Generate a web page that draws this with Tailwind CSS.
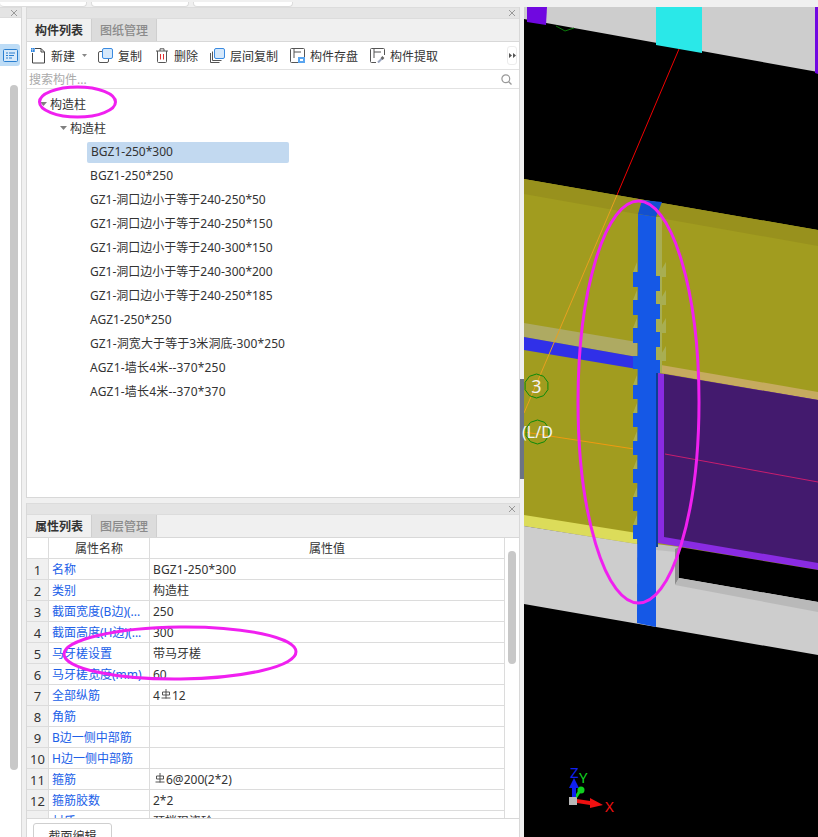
<!DOCTYPE html>
<html lang="zh">
<head>
<meta charset="utf-8">
<script src="https://cdn.jsdelivr.net/npm/@tailwindcss/browser@4"></script>
</head>
<body class="m-0 overflow-hidden bg-[#f0f0f0]">
<div class="relative w-[818px] h-[837px] overflow-hidden flex flex-col bg-[#f0f0f0] text-[12px] leading-[16px] text-[#333] font-['Noto_Sans','Noto_Sans_CJK_SC',sans-serif]">
  <!-- top tabs -->
  <div class="h-[7px] shrink-0 flex gap-[4px] items-end">
    <div class="w-[87px] h-[5px] bg-white border border-t-0 border-l-0 border-[#dcdcdc] rounded-b-[4px]"></div>
    <div class="w-[98px] h-[5px] bg-white border border-t-0 border-[#dcdcdc] rounded-b-[4px]"></div>
    <div class="w-[100px] h-[5px] bg-white border border-t-0 border-[#dcdcdc] rounded-b-[4px]"></div>
  </div>
  <div class="flex flex-1 min-h-0">
    <!-- left rail -->
    <div class="w-[22px] shrink-0 flex flex-col bg-white border-r border-[#d8d8d8]">
      <div class="h-[11px] shrink-0 bg-[#e4e4e4] border-y border-[#dcdcdc] flex items-center justify-end pr-[3px]">
        <svg width="8" height="8" viewBox="0 0 8 8"><path d="M1 1l6 6M7 1l-6 6" stroke="#999" stroke-width="1"/></svg>
      </div>
      <div class="mt-[26px] h-[22px] w-[20px] bg-[#bddcf6] rounded-r-[3px] flex items-center justify-center">
        <svg width="15" height="13" viewBox="0 0 15 13"><rect x=".5" y=".5" width="14" height="12" rx="1" fill="#d6e9fa" stroke="#2a7fd0"/><path d="M3 4h2M6 4h6M3 6.500h2M6 6.500h5M3 9h2M6 9h3" stroke="#2a7fd0"/></svg>
      </div>
      <div class="mt-[19px] ml-[10px] w-[8px] h-[685px] bg-[#c8c8c8] rounded-[4px]"></div>
    </div>
    <!-- panels column -->
    <div class="w-[494px] shrink-0 ml-[4px] flex flex-col">
      <!-- component panel -->
      <section class="h-[491px] shrink-0 flex flex-col bg-white border-x border-b border-[#d8d8d8]">
        <div class="h-[12px] shrink-0 bg-[#e4e4e4] border-y border-[#dcdcdc] flex items-center justify-end pr-[3px]">
          <svg width="8" height="8" viewBox="0 0 8 8"><path d="M1 1l6 6M7 1l-6 6" stroke="#999" stroke-width="1"/></svg>
        </div>
        <div class="h-[23px] shrink-0 flex bg-[#f0f0f0] border-b border-[#d8d8d8]">
          <div class="w-[64px] pt-[2px] flex items-center justify-center font-bold text-[#333]">构件列表</div>
          <div class="w-[66px] h-[22px] pt-[2px] flex items-center justify-center bg-[#dcdcdc] text-[#8a8a8a] border-x border-[#cfcfcf] font-medium">图纸管理</div>
        </div>
        <div class="relative h-[28px] shrink-0 flex items-center pl-[4px] border-b border-[#e2e2e2]">
          <div class="flex items-center gap-[5px]">
            <svg width="15" height="16" viewBox="0 0 15 16"><path d="M1.500 5v10h12V4L10 .5H4" fill="none" stroke="#444"/><path d="M10 .5V4h3.500" fill="none" stroke="#444"/><path d="M0 0h4v4H0z" fill="#2f86e0"/><path d="M1 1h1v1H1zM3 1h1M1 3h1M3 3h1" stroke="#fff" stroke-width=".6"/></svg>
            <span class="pt-[2px]">新建</span>
          </div>
          <svg class="ml-[7px]" width="5" height="3" viewBox="0 0 5 3"><path d="M0 0h5L2.500 3z" fill="#888"/></svg>
          <div class="ml-[11px] flex items-center gap-[5px]">
            <svg width="15" height="15" viewBox="0 0 15 15"><rect x=".5" y="3.500" width="10" height="11" rx="1.500" fill="#fff" stroke="#555"/><rect x="4.500" y=".5" width="10" height="10" rx="1.500" fill="#d5e8fb" stroke="#3a8ae0"/></svg>
            <span class="pt-[2px]">复制</span>
          </div>
          <div class="ml-[13px] flex items-center gap-[5px]">
            <svg width="14" height="15" viewBox="0 0 14 15"><path d="M1 3h12M5 3V.8h4V3" fill="none" stroke="#555"/><path d="M2.500 3v10.500a1 1 0 001 1h7a1 1 0 001-1V3" fill="none" stroke="#555"/><path d="M5.500 6v5.500M8.500 6v5.500" stroke="#e03030"/></svg>
            <span class="pt-[2px]">删除</span>
          </div>
          <div class="ml-[12px] flex items-center gap-[5px]">
            <svg width="15" height="15" viewBox="0 0 15 15"><path d="M.5 5v9.500h9M2.500 3.500v9h9" fill="none" stroke="#555"/><rect x="4.500" y=".5" width="10" height="10" rx="1.500" fill="#d5e8fb" stroke="#3a8ae0"/></svg>
            <span class="pt-[2px]">层间复制</span>
          </div>
          <div class="ml-[12px] flex items-center gap-[5px]">
            <svg width="15" height="15" viewBox="0 0 15 15"><path d="M14.500 9V1.500a1 1 0 00-1-1h-12a1 1 0 00-1 1v12a1 1 0 001 1H8" fill="none" stroke="#555"/><path d="M4 .5V10M4 4h7" fill="none" stroke="#555"/><rect x="8" y="9" width="7" height="6" fill="#5aa5ef"/><rect x="10" y="11" width="3" height="2" fill="#fff"/></svg>
            <span class="pt-[2px]">构件存盘</span>
          </div>
          <div class="ml-[12px] flex items-center gap-[5px]">
            <svg width="15" height="15" viewBox="0 0 15 15"><path d="M14.500 7V1.500a1 1 0 00-1-1h-12a1 1 0 00-1 1v12a1 1 0 001 1H6" fill="none" stroke="#555"/><path d="M4 .5V10M4 4h7" fill="none" stroke="#555"/><path d="M8 14.500l4-4" stroke="#9aa5c0" stroke-width="2"/><path d="M11.500 9l2 2" stroke="#666" stroke-width="2.500"/></svg>
            <span class="pt-[2px]">构件提取</span>
          </div>
          <div class="absolute right-[2px] top-[4px] w-[10px] h-[19px] border border-[#ececec] rounded-[3px] flex items-center justify-center">
            <svg width="7" height="5" viewBox="0 0 7 5"><path d="M0 0l3 2.500L0 5zM4 0l3 2.500L4 5z" fill="#555"/></svg>
          </div>
        </div>
        <div class="h-[19px] shrink-0 flex items-center justify-between pl-[2px] pr-[7px] border-b border-[#e2e2e2] text-[#aaa]">
          <span class="pt-[2px]">搜索构件...</span>
          <svg width="11" height="11" viewBox="0 0 11 11"><circle cx="4.800" cy="4.800" r="3.900" fill="none" stroke="#999" stroke-width="1.200"/><path d="M7.700 7.700L10.500 10.500" stroke="#999" stroke-width="1.300"/></svg>
        </div>
        <div class="flex flex-col pt-[3px]">
          <div class="h-[24px] flex items-center pl-[13px] gap-[3px]"><svg width="7" height="4" viewBox="0 0 7 4"><path d="M0 0h7L3.500 4z" fill="#808080"/></svg><span class="pt-[2px]">构造柱</span></div>
          <div class="h-[24px] flex items-center pl-[33px] gap-[3px]"><svg width="7" height="4" viewBox="0 0 7 4"><path d="M0 0h7L3.500 4z" fill="#808080"/></svg><span class="pt-[2px]">构造柱</span></div>
          <div class="h-[24px] flex items-center ml-[60px]"><div class="w-[202px] h-[21px] pl-[4px] flex items-center bg-[#c2d9f0] rounded-[2px]">BGZ1-250*300</div></div>
          <div class="h-[24px] flex items-center pl-[63px] tracking-[0.1px]">BGZ1-250*250</div>
          <div class="h-[24px] flex items-center pl-[63px]">GZ1-洞口边小于等于240-250*50</div>
          <div class="h-[24px] flex items-center pl-[63px]">GZ1-洞口边小于等于240-250*150</div>
          <div class="h-[24px] flex items-center pl-[63px]">GZ1-洞口边小于等于240-300*150</div>
          <div class="h-[24px] flex items-center pl-[63px]">GZ1-洞口边小于等于240-300*200</div>
          <div class="h-[24px] flex items-center pl-[63px]">GZ1-洞口边小于等于240-250*185</div>
          <div class="h-[24px] flex items-center pl-[63px]">AGZ1-250*250</div>
          <div class="h-[24px] flex items-center pl-[63px] tracking-[0.1px]">GZ1-洞宽大于等于3米洞底-300*250</div>
          <div class="h-[24px] flex items-center pl-[63px] tracking-[0.2px]">AGZ1-墙长4米--370*250</div>
          <div class="h-[24px] flex items-center pl-[63px] tracking-[0.2px]">AGZ1-墙长4米--370*370</div>
        </div>
      </section>
      <div class="h-[5px] shrink-0"></div>
      <!-- property panel -->
      <section class="flex-1 min-h-0 flex flex-col bg-white border-x border-[#d8d8d8]">
        <div class="h-[12px] shrink-0 bg-[#e4e4e4] border-y border-[#dcdcdc] flex items-center justify-end pr-[3px]">
          <svg width="8" height="8" viewBox="0 0 8 8"><path d="M1 1l6 6M7 1l-6 6" stroke="#999" stroke-width="1"/></svg>
        </div>
        <div class="h-[23px] shrink-0 flex bg-[#f0f0f0] border-b border-[#d8d8d8]">
          <div class="w-[64px] pt-[2px] flex items-center justify-center font-bold">属性列表</div>
          <div class="w-[66px] h-[22px] pt-[2px] flex items-center justify-center bg-[#dcdcdc] text-[#8a8a8a] border-x border-[#cfcfcf] font-medium">图层管理</div>
        </div>
        <div class="relative h-[281px] shrink-0 overflow-hidden border-b border-[#d8d8d8]">
          <div class="grid grid-cols-[22px_101px_355px] auto-rows-[21px] [&>div]:pt-[2px]">
            <div class="border-r border-b border-[#dcdcdc]"></div><div class="border-r border-b border-[#dcdcdc] flex items-center justify-center">属性名称</div><div class="border-r border-b border-[#dcdcdc] flex items-center justify-center">属性值</div>

            <div class="border-r border-b border-[#dcdcdc] bg-[#f0f0f0] flex items-center justify-center text-[13px]">1</div><div class="border-r border-b border-[#dcdcdc] text-[#2060e8] flex items-center pl-[3px] overflow-hidden whitespace-nowrap">名称</div><div class="border-r border-b border-[#dcdcdc] flex items-center pl-[3px] tracking-[0.1px]">BGZ1-250*300</div>
            <div class="border-r border-b border-[#dcdcdc] bg-[#f0f0f0] flex items-center justify-center text-[13px]">2</div><div class="border-r border-b border-[#dcdcdc] text-[#2060e8] flex items-center pl-[3px] overflow-hidden whitespace-nowrap">类别</div><div class="border-r border-b border-[#dcdcdc] flex items-center pl-[3px]">构造柱</div>
            <div class="border-r border-b border-[#dcdcdc] bg-[#f0f0f0] flex items-center justify-center text-[13px]">3</div><div class="border-r border-b border-[#dcdcdc] text-[#2060e8] flex items-center pl-[3px] overflow-hidden whitespace-nowrap">截面宽度(B边)(...</div><div class="border-r border-b border-[#dcdcdc] flex items-center pl-[3px]">250</div>
            <div class="border-r border-b border-[#dcdcdc] bg-[#f0f0f0] flex items-center justify-center text-[13px]">4</div><div class="border-r border-b border-[#dcdcdc] text-[#2060e8] flex items-center pl-[3px] overflow-hidden whitespace-nowrap">截面高度(H边)(...</div><div class="border-r border-b border-[#dcdcdc] flex items-center pl-[3px]">300</div>
            <div class="border-r border-b border-[#dcdcdc] bg-[#f0f0f0] flex items-center justify-center text-[13px]">5</div><div class="border-r border-b border-[#dcdcdc] text-[#2060e8] flex items-center pl-[3px] overflow-hidden whitespace-nowrap">马牙槎设置</div><div class="border-r border-b border-[#dcdcdc] flex items-center pl-[3px]">带马牙槎</div>
            <div class="border-r border-b border-[#dcdcdc] bg-[#f0f0f0] flex items-center justify-center text-[13px]">6</div><div class="border-r border-b border-[#dcdcdc] text-[#2060e8] flex items-center pl-[3px] overflow-hidden whitespace-nowrap">马牙槎宽度(mm)</div><div class="border-r border-b border-[#dcdcdc] flex items-center pl-[3px]">60</div>
            <div class="border-r border-b border-[#dcdcdc] bg-[#f0f0f0] flex items-center justify-center text-[13px]">7</div><div class="border-r border-b border-[#dcdcdc] text-[#2060e8] flex items-center pl-[3px] overflow-hidden whitespace-nowrap">全部纵筋</div><div class="border-r border-b border-[#dcdcdc] flex items-center pl-[3px]">4<svg class="mx-[1px] mb-[4px]" width="10" height="10" viewBox="0 0 10 10"><path d="M1.500 3h7v3h-7zM5 0v9.500M.5 9h9" fill="none" stroke="#444" stroke-width=".9"/></svg>12</div>
            <div class="border-r border-b border-[#dcdcdc] bg-[#f0f0f0] flex items-center justify-center text-[13px]">8</div><div class="border-r border-b border-[#dcdcdc] text-[#2060e8] flex items-center pl-[3px] overflow-hidden whitespace-nowrap">角筋</div><div class="border-r border-b border-[#dcdcdc]"></div>
            <div class="border-r border-b border-[#dcdcdc] bg-[#f0f0f0] flex items-center justify-center text-[13px]">9</div><div class="border-r border-b border-[#dcdcdc] text-[#2060e8] flex items-center pl-[3px] overflow-hidden whitespace-nowrap">B边一侧中部筋</div><div class="border-r border-b border-[#dcdcdc]"></div>
            <div class="border-r border-b border-[#dcdcdc] bg-[#f0f0f0] flex items-center justify-center text-[13px]">10</div><div class="border-r border-b border-[#dcdcdc] text-[#2060e8] flex items-center pl-[3px] overflow-hidden whitespace-nowrap">H边一侧中部筋</div><div class="border-r border-b border-[#dcdcdc]"></div>
            <div class="border-r border-b border-[#dcdcdc] bg-[#f0f0f0] flex items-center justify-center text-[13px]">11</div><div class="border-r border-b border-[#dcdcdc] text-[#2060e8] flex items-center pl-[3px] overflow-hidden whitespace-nowrap">箍筋</div><div class="border-r border-b border-[#dcdcdc] flex items-center pl-[5px]"><svg class="mr-[1px] mb-[4px]" width="10" height="10" viewBox="0 0 10 10"><path d="M1.500 3h7v3h-7zM5 0v9.500M.5 9h9" fill="none" stroke="#444" stroke-width=".9"/></svg>6@200(2*2)</div>
            <div class="border-r border-b border-[#dcdcdc] bg-[#f0f0f0] flex items-center justify-center text-[13px]">12</div><div class="border-r border-b border-[#dcdcdc] text-[#2060e8] flex items-center pl-[3px] overflow-hidden whitespace-nowrap">箍筋胶数</div><div class="border-r border-b border-[#dcdcdc] flex items-center pl-[3px]">2*2</div>
            <div class="border-r border-b border-[#dcdcdc] bg-[#f0f0f0] flex items-center justify-center text-[13px]">13</div><div class="border-r border-b border-[#dcdcdc] text-[#2060e8] flex items-center pl-[3px] overflow-hidden whitespace-nowrap">材质</div><div class="border-r border-b border-[#dcdcdc] flex items-center pl-[3px]">预拌现浇砼</div>
          </div>
          <div class="absolute right-[3px] top-[13px] w-[8px] h-[113px] bg-[#c8c8c8] rounded-[4px]"></div>
        </div>
        <div class="pl-[6px] pt-[4px]">
          <div class="w-[79px] h-[24px] pt-[4px] flex items-center justify-center border border-[#cfcfcf] rounded-t-[3px] bg-white">截面编辑</div>
        </div>
      </section>
    </div>
    <div class="w-[4px] shrink-0"></div>
    <!-- 3D view -->
    <svg class="block w-[294px] h-[830px] shrink-0 bg-black font-['Noto_Sans',sans-serif]" viewBox="524 7 294 830">
      <polygon points="524,7 818,7 818,72 524,19" fill="#cdcdcd"/>
      <polygon points="527,7 547,7 546,25 527,22" fill="#7008e0"/>
      <polygon points="656,7 702,7 702,53 656,45" fill="#2ae8e8"/>
      <polygon points="815,7 818,7 818,74 815,73" fill="#7008e0"/>
      <path d="M556,26l9,5l9,-3" fill="none" stroke="#0a7a0a"/>
      <path d="M679,49L617,195" stroke="#f00000"/>
      <!-- yellow wall -->
      <polygon points="524,179 818,230 818,575 637,545 524,526" fill="#a19c1f"/>
      <polygon points="524,179 818,230 818,246 524,194" fill="#98911d"/>
      <polygon points="524,515 637,533 637,544 524,526" fill="#dcdc5a"/>
      <!-- grey below -->
      <polygon points="524,526 637,544 818,575 818,655 524,604" fill="#cdcdcd"/>
      <polygon points="524,323 637,342 637,357 524,337" fill="#aeaa62"/>
      <polygon points="524,337 637,357 637,369 524,350" fill="#3030e8"/>
      <path d="M617,195L524,413" stroke="#e8a020"/>
      <path d="M524,432L634,449" stroke="#f09a10"/>
      <!-- right side -->
      <polygon points="661,365 818,392 818,400 661,373" fill="#c6ab5f"/>
      <polygon points="658,373 818,400 818,570 658,543" fill="#8a2be2"/>
      <polygon points="664,374 818,400 818,563 664,537" fill="#431a6e"/>
      <path d="M665,454L818,482" stroke="#c81e6e"/>
      <polygon points="656,544 680,547 676,552 656,550" fill="#bdbdbd"/>
      <polygon points="679,547 818,570 818,602 679,578" fill="#000"/>
      <polygon points="675,549 679,547 679,578 675,585" fill="#8c8c8c"/>
      <polygon points="675,585 679,578 818,602 818,612" fill="#b9b9b9"/>
      <!-- pale teeth -->
      <rect x="656" y="217" width="6" height="156" fill="#a8ae52"/>
      <g fill="#a8ae52">
        <polygon points="660,272 666,262 666,277 660,277"/>
        <polygon points="660,300 666,290 666,305 660,305"/>
        <polygon points="660,328 666,318 666,333 660,333"/>
        <polygon points="660,356 666,346 666,361 660,361"/>
        <polygon points="633,272 637,262 637,272"/>
        <polygon points="633,300 637,290 637,300"/>
        <polygon points="633,328 637,318 637,328"/>
        <polygon points="633,385 637,375 637,385"/>
        <polygon points="633,413 637,403 637,413"/>
        <polygon points="633,441 637,431 637,441"/>
        <polygon points="633,469 637,459 637,469"/>
        <polygon points="633,497 637,487 637,497"/>
        <polygon points="633,525 637,515 637,525"/>
      </g>
      <!-- column -->
      <polygon points="638,214 656,217 656,627 637,623" fill="#1558e6"/>
      <polygon points="642,200 662,202 656,217 638,214" fill="#1250d0"/>
      <rect x="656" y="373" width="2" height="174" fill="#0d3f94"/>
      <g fill="#1558e6">
        <rect x="633" y="272" width="5" height="15"/><rect x="633" y="300" width="5" height="15"/><rect x="633" y="328" width="5" height="15"/><rect x="633" y="356" width="5" height="13"/><rect x="633" y="385" width="5" height="14"/><rect x="633" y="413" width="5" height="14"/><rect x="633" y="441" width="5" height="14"/><rect x="633" y="469" width="5" height="14"/><rect x="633" y="497" width="5" height="14"/><rect x="633" y="525" width="5" height="14"/>
        <rect x="656" y="276" width="4" height="15"/><rect x="656" y="304" width="4" height="15"/><rect x="656" y="332" width="4" height="15"/><rect x="656" y="360" width="4" height="13"/>
      </g>
      <!-- axis -->
      <rect x="569" y="797" width="8" height="8" fill="#b8b8b8"/>
      <circle cx="581" cy="790" r="3.500" fill="#10d020"/>
      <path d="M576,797l5,-8" stroke="#10d020" stroke-width="3"/>
      <rect x="572" y="787" width="4" height="10" fill="#1020f0"/>
      <polygon points="574,778 579,788 569,788" fill="#1020f0"/>
      <polygon points="577,799 590,801 590,798 603,805 590,808 590,805 577,803" fill="#f01010"/>
      <text x="570" y="778" font-size="15" fill="#1020f0">Z</text>
      <text x="579" y="783" font-size="15" fill="#10d020">Y</text>
      <text x="605" y="812" font-size="15" fill="#f01010">X</text>
    </svg>
  </div>
  <!-- overlays -->
  <svg class="absolute left-0 top-0 pointer-events-none" width="818" height="837" viewBox="0 0 818 837">
    <rect x="520" y="379" width="4" height="100" fill="#6c7484"/>
    <polygon transform="translate(536.500 386)" points="0,-12 7,-9.700 11.400,-3.700 11.400,3.700 7,9.700 0,12 -7,9.700 -11.400,3.700 -11.400,-3.700 -7,-9.700" fill="none" stroke="#0a8a0a"/>
    <polygon transform="translate(537.500 432)" points="0,-12 7,-9.700 11.400,-3.700 11.400,3.700 7,9.700 0,12 -7,9.700 -11.400,3.700 -11.400,-3.700 -7,-9.700" fill="none" stroke="#0a8a0a"/>
    <text x="536.500" y="392.500" font-size="18" fill="#f4f4f4" text-anchor="middle" font-family="Noto Sans, sans-serif">3</text>
    <text x="522" y="438" font-size="16" fill="#f4f4f4" font-family="Noto Sans, sans-serif">(L/D</text>
    <ellipse cx="77.500" cy="102" rx="38" ry="15" fill="none" stroke="#f020f0" stroke-width="3"/>
    <ellipse cx="638.500" cy="402" rx="60.500" ry="201" fill="none" stroke="#f020f0" stroke-width="3"/>
    <ellipse cx="180" cy="653" rx="116" ry="26" fill="none" stroke="#f020f0" stroke-width="3" transform="rotate(-0.6 180 653)"/>
  </svg>
</div>
</body>
</html>
